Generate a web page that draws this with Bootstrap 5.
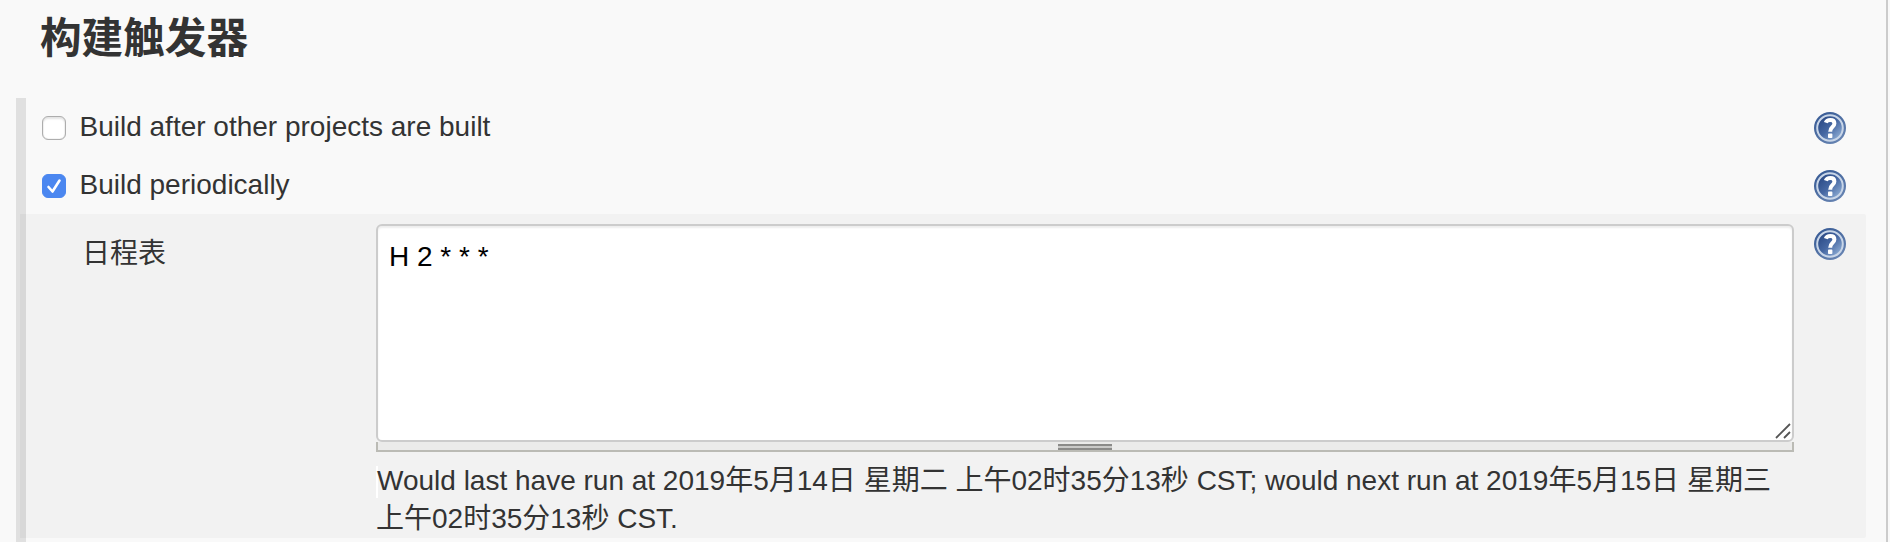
<!DOCTYPE html>
<html lang="zh-CN">
<head>
<meta charset="utf-8">
<meta name="viewport" content="width=device-width, initial-scale=1">
<title>构建触发器</title>
<link href="https://cdn.jsdelivr.net/npm/bootstrap@5.3.0/dist/css/bootstrap.min.css" rel="stylesheet">
<style>
  body { background: #f9f9f9; color: #333; font: 28px/38px "Liberation Sans", "Noto Sans CJK SC", sans-serif; }
  .config-page { width: 1888px; height: 542px; border-right: 2px solid #ccc; }
  .section-title { height: 98px; padding: 13px 0 0 40px; font-size: 41.6px; line-height: 52px; font-weight: 700; }
  .trigger-group { margin-left: 16px; height: 444px; border-left: 10px solid #e0e0e0; }
  .option-row { height: 58px; padding: 0 40px 0 16px; }
  .option-row .form-check-input { width: 24px; height: 24px; margin: 2px 0 0; border: 1px solid #adadad; border-radius: 6px; background-color: #fff; box-shadow: inset 0 2px 2px #e4e4e4, inset 0 0 1px #999; }
  .option-row .form-check-input:checked { border-color: #4b87f0; background-color: #4b87f0; box-shadow: none;
    background-size: 24px; background-position: center;
    background-image: url("data:image/svg+xml,%3Csvg xmlns='http://www.w3.org/2000/svg' viewBox='0 0 24 24'%3E%3Cpath d='M6.5 13l4 4.5L17.5 6.5' fill='none' stroke='white' stroke-width='2.6' stroke-linecap='round' stroke-linejoin='round'/%3E%3C/svg%3E"); }
  .option-row label { margin-left: 13.5px; }
  .help-icon { width: 32px; height: 32px; display: block; flex: none; }
  .option-row .help-icon { margin-top: 2px; }
  .schedule-panel { margin-left: -6px; width: 1846px; height: 324px; border-left: 6px solid #d8d8d8; background: #f2f2f2; border-radius: 0 2px 2px 0; padding: 10px 20px 0 56px; }
  .schedule-label { width: 294px; padding-top: 11px; }
  .schedule-field { width: 1418px; }
  .schedule-field textarea { display: block; height: 218px; padding: 12px 11px; border: 2px solid #ccc; border-radius: 6px; color: #000; background: #fff; font: inherit; resize: none; box-shadow: inset 0 2px 2px #eee; }
  .corner-grip { right: 3px; bottom: 3px; width: 16px; height: 16px; }
  .resize-bar { height: 10px; border: solid #bbbbb5; border-width: 0 2px 2px; background: #ebebea; padding-top: 2px; }
  .resize-bar span { width: 54px; height: 6px; background: linear-gradient(#8b8b89 0 2px, #cacac8 2px 4px, #8b8b89 4px 6px); }
  .run-note { margin-top: 10px; width: 1410px; text-indent: 1px; background: linear-gradient(#fff, #fff) 0 4px / 2px 32px no-repeat; }
</style>
</head>
<body>
<svg class="position-absolute" width="0" height="0" aria-hidden="true">
  <defs>
    <linearGradient id="helpBlue" x1="0" y1="0" x2="1" y2="1">
      <stop offset="0.15" stop-color="#2d4c87"/><stop offset="0.5" stop-color="#4668a3"/><stop offset="0.9" stop-color="#91afd6"/>
    </linearGradient>
    <linearGradient id="helpRim" x1="0" y1="0" x2="0.7" y2="1">
      <stop offset="0" stop-color="#315591"/><stop offset="1" stop-color="#6784b2"/>
    </linearGradient>
  </defs>
  <symbol id="help" viewBox="0 0 32 32">
    <circle cx="16" cy="16" r="16" fill="url(#helpRim)"/>
    <circle cx="16" cy="16" r="12.8" fill="url(#helpBlue)" stroke="#c9d6e8" stroke-width="2"/>
    <path d="M11.8 10.6Q12.8 8 16.3 8Q20.4 8 20.4 11.4Q20.4 13.4 18.2 15.2Q16.2 16.8 16.2 19.8" fill="none" stroke="#fff" stroke-width="4"/>
    <rect x="14" y="21.6" width="4.4" height="4.4" rx=".8" fill="#fff"/>
  </symbol>
</svg>
<main class="config-page overflow-hidden">
  <h1 class="section-title m-0">构建触发器</h1>
  <section class="trigger-group">
    <div class="option-row d-flex align-items-center">
      <input class="form-check-input" type="checkbox" id="after">
      <label class="me-auto" for="after">Build after other projects are built</label>
      <svg class="help-icon"><use href="#help"/></svg>
    </div>
    <div class="option-row d-flex align-items-center">
      <input class="form-check-input" type="checkbox" id="periodic" checked>
      <label class="me-auto" for="periodic">Build periodically</label>
      <svg class="help-icon"><use href="#help"/></svg>
    </div>
    <div class="schedule-panel d-flex align-items-start">
      <label class="schedule-label" for="spec">日程表</label>
      <div class="schedule-field">
        <div class="position-relative">
          <textarea class="w-100" id="spec" spellcheck="false">H 2 * * *</textarea>
          <svg class="corner-grip position-absolute" viewBox="0 0 16 16" fill="none" stroke="#555" stroke-width="1.8"><path d="M1 15L15 1M9 15L15 9"/></svg>
        </div>
        <div class="resize-bar d-flex justify-content-center"><span></span></div>
        <div class="run-note">Would last have run at 2019年5月14日 星期二 上午02时35分13秒 CST; would next run at 2019年5月15日 星期三 上午02时35分13秒 CST.</div>
      </div>
      <svg class="help-icon ms-auto mt-1"><use href="#help"/></svg>
    </div>
  </section>
</main>
<script src="https://cdn.jsdelivr.net/npm/bootstrap@5.3.0/dist/js/bootstrap.bundle.min.js"></script>
</body>
</html>
